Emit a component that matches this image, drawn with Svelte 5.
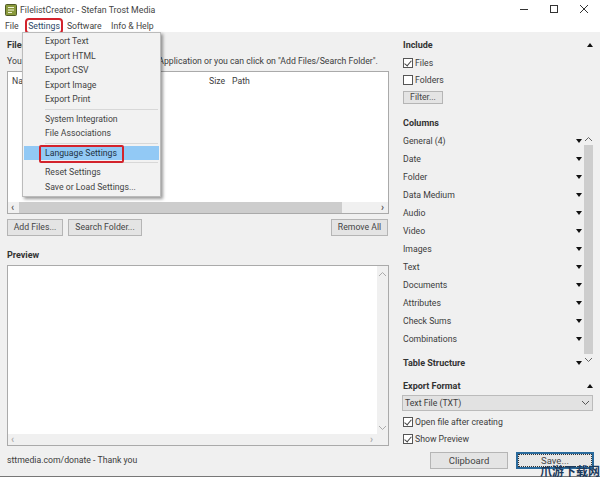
<script>
  const menu = [
    ['Export Text', 'Export HTML', 'Export CSV', 'Export Image', 'Export Print'],
    ['System Integration', 'File Associations'],
    ['Language Settings'],
    ['Reset Settings', 'Save or Load Settings...']
  ];
  const columns = ['General (4)', 'Date', 'Folder', 'Data Medium', 'Audio', 'Video', 'Images', 'Text', 'Documents', 'Attributes', 'Check Sums', 'Combinations'];
</script>

<div class="window">
  <header class="titlebar">
    <svg class="appicon" width="12" height="12" viewBox="0 0 12 12">
      <rect x="0.5" y="0.5" width="11" height="11" rx="1" fill="#8a9a3c" stroke="#4f5a28" />
      <path d="M3 3.5h6M3 6h6M3 8.5h4" stroke="#f3f3d8" stroke-width="1.2" />
    </svg>
    <span class="title">FilelistCreator - Stefan Trost Media</span>
    <div class="winbtns">
      <svg width="10" height="10" viewBox="0 0 10 10"><path d="M1 5.5h8" stroke="#333" /></svg>
      <svg width="10" height="10" viewBox="0 0 10 10"><rect x="1.5" y="1.5" width="7" height="7" fill="none" stroke="#333" /></svg>
      <svg width="10" height="10" viewBox="0 0 10 10"><path d="M1 1l8 8M9 1l-8 8" stroke="#333" /></svg>
    </div>
  </header>

  <nav class="menubar">
    <span>File</span>
    <span class="active">Settings</span>
    <span>Software</span>
    <span>Info &amp; Help</span>
    <div class="dropdown">
      {#each menu as group, i}
        {#if i > 0}<div class="sep"></div>{/if}
        {#each group as item}
          <div class="item" class:selected={item === 'Language Settings'}><span>{item}</span></div>
        {/each}
      {/each}
    </div>
  </nav>

  <main class="body">
    <section class="left">
      <h2 class="filehead">Files</h2>
      <p class="hint">You can drag and drop all files into this Application or you can click on "Add Files/Search Folder".</p>
      <div class="box listbox">
        <div class="thead">
          <span class="th name">Name</span>
          <span class="th size">Size</span>
          <span class="th path">Path</span>
        </div>
        <div class="grow"></div>
        <div class="hscroll">
          <span class="chev">‹</span>
          <div class="thumb"></div>
          <span class="chev">›</span>
        </div>
      </div>
      <div class="actions">
        <button class="btn add">Add Files...</button>
        <button class="btn search">Search Folder...</button>
        <span class="grow"></span>
        <button class="btn remove">Remove All</button>
      </div>
      <h2 class="previewhead">Preview</h2>
      <div class="box previewbox">
        <div class="previewmain">
          <div class="grow"></div>
          <div class="hscroll light"><span class="chev">‹</span><span class="chev">›</span></div>
        </div>
        <div class="vscroll light">
          <svg width="9" height="6" viewBox="0 0 9 6"><path d="M1 5l3.5-3.5L8 5" fill="none" stroke="#aaa" /></svg>
          <svg width="9" height="6" viewBox="0 0 9 6"><path d="M1 1l3.5 3.5L8 1" fill="none" stroke="#aaa" /></svg>
        </div>
      </div>
      <p class="donate">sttmedia.com/donate - Thank you</p>
    </section>

    <aside class="right">
      <div class="rowhead"><h2>Include</h2><i class="tri up"></i></div>
      <label class="check first"><span class="cb on"></span>Files</label>
      <label class="check"><span class="cb"></span>Folders</label>
      <button class="btn filter">Filter...</button>
      <h2 class="colhead">Columns</h2>
      <div class="colwrap">
        <div class="collist">
          {#each columns as c}
            <div class="colrow"><span>{c}</span><i class="tri"></i></div>
          {/each}
          <div class="colrow tablerow"><h2>Table Structure</h2><i class="tri"></i></div>
        </div>
        <div class="colscroll">
          <svg width="9" height="6" viewBox="0 0 9 6"><path d="M1 5l3.5-3.5L8 5" fill="none" stroke="#666" /></svg>
          <div class="colthumb"></div>
          <svg width="9" height="6" viewBox="0 0 9 6"><path d="M1 1l3.5 3.5L8 1" fill="none" stroke="#666" /></svg>
        </div>
      </div>
      <div class="rowhead exporthead"><h2>Export Format</h2><i class="tri up"></i></div>
      <div class="select">
        <span>Text File (TXT)</span>
        <svg width="9" height="6" viewBox="0 0 9 6"><path d="M1 1l3.5 3.5L8 1" fill="none" stroke="#555" /></svg>
      </div>
      <label class="check opt"><span class="cb on"></span>Open file after creating</label>
      <label class="check"><span class="cb on"></span>Show Preview</label>
      <div class="savebar">
        <button class="btn big">Clipboard</button>
        <button class="btn big save">Save...</button>
      </div>
    </aside>
  </main>
  <div class="watermark">爪游下载网</div>
</div>

<style>
  :global(body) {
    margin: 0;
    background: #fff;
  }
  .window {
    width: 600px;
    height: 477px;
    overflow: hidden;
    position: relative;
    display: flex;
    flex-direction: column;
    font-family: Roboto, "Open Sans", sans-serif;
    font-size: 8.7px;
    color: #3c3c3c;
    background: #fff;
  }
  .titlebar {
    height: 19px;
    display: flex;
    align-items: center;
    padding-left: 5px;
    flex: none;
  }
  .appicon { margin-right: 3px; }
  .title { font-size: 8.8px; color: #444; }
  .winbtns {
    margin-left: auto;
    display: flex;
    gap: 20px;
    padding-right: 11px;
    margin-top: -2px;
  }
  .menubar {
    height: 13px;
    flex: none;
    display: flex;
    align-items: center;
    position: relative;
    padding-left: 5px;
    gap: 9.5px;
    color: #444;
  }
  .menubar > .active {
    margin-right: -2.5px;
    outline: 2px solid #d3232c;
    outline-offset: 1px;
    border-radius: 1px;
    color: #2d4a6a;
  }
  .dropdown {
    position: absolute;
    left: 22px;
    top: 13px;
    width: 139px;
    height: 165px;
    box-sizing: border-box;
    padding: 1px 1px;
    background: #f2f2f2;
    border: 1px solid #bbb;
    box-shadow: 2px 2px 3px rgba(0,0,0,.4);
    z-index: 5;
  }
  .item {
    height: 14.5px;
    line-height: 14px;
    padding-left: 21px;
    color: #444;
  }
  .item.selected {
    background: #92c9f5;
    color: #234;
    position: relative;
  }
  .item.selected span {
    position: relative;
    z-index: 1;
  }
  .item.selected::after {
    content: "";
    position: absolute;
    left: 15px;
    top: -1px;
    width: 81px;
    height: 14px;
    border: 2px solid #d3232c;
    border-radius: 2px;
  }
  .sep {
    height: 1px;
    margin: 2px 1px 2px 21px;
    background: #d8d8d8;
  }
  .body {
    flex: 1;
    min-height: 0;
    background: #f0f0f0;
    border-bottom: 1px solid #777;
    display: flex;
    padding-left: 7px;
  }
  h2 {
    margin: 0;
    font-size: 9px;
    font-weight: 700;
    color: #333;
  }
  .left {
    width: 382px;
    flex: none;
    display: flex;
    flex-direction: column;
  }
  .filehead { margin-top: 7px; line-height: 12px; }
  .hint {
    margin: 4px 0 0;
    white-space: nowrap;
    line-height: 13px;
    height: 14px;
  }
  .box {
    background: #fff;
    border: 1px solid #aaa;
    box-sizing: border-box;
  }
  .listbox {
    margin-top: 2px;
    height: 143px;
    display: flex;
    flex-direction: column;
  }
  .grow { flex: 1; }
  .thead {
    display: flex;
    height: 17px;
    align-items: center;
    position: relative;
  }
  .th { position: absolute; }
  .name { left: 4px; }
  .size { left: 201px; }
  .path { left: 224px; }
  .hscroll {
    height: 11px;
    background: #f0f0f0;
    display: flex;
    align-items: center;
    justify-content: space-between;
    padding: 0 4px 0 3px;
    position: relative;
    flex: none;
  }
  .hscroll .thumb {
    position: absolute;
    left: 11px;
    right: 46px;
    top: 0;
    bottom: 0;
    background: #cdcdcd;
  }
  .chev { font-size: 10px; line-height: 10px; font-weight: 700; color: #555; }
  .light .chev { color: #aaa; }
  .actions {
    margin-top: 5px;
    display: flex;
    gap: 5px;
    padding-right: 1px;
  }
  .btn {
    font: inherit;
    color: #444;
    background: #e4e4e4;
    border: 1px solid #b5b5b5;
    padding: 0;
    height: 17px;
    line-height: 13px;
    border-radius: 0;
  }
  .add { width: 56px; }
  .search { width: 74px; }
  .remove { width: 57px; }
  .previewhead { margin-top: 13px; line-height: 12px; }
  .previewbox {
    margin-top: 4px;
    height: 181px;
    display: flex;
  }
  .previewmain {
    flex: 1;
    display: flex;
    flex-direction: column;
  }
  .vscroll {
    width: 11px;
    background: #f0f0f0;
    display: flex;
    flex-direction: column;
    justify-content: space-between;
    align-items: center;
    padding: 5px 0 14px;
    box-sizing: border-box;
  }
  .donate { margin: 8px 0 0; line-height: 12px; }
  .right {
    margin-left: 12px;
    width: 192px;
    flex: none;
    display: flex;
    flex-direction: column;
    padding-left: 2px;
    box-sizing: border-box;
  }
  .rowhead {
    display: flex;
    align-items: center;
    justify-content: space-between;
    margin-top: 7px;
    height: 12px;
  }
  .tri {
    display: block;
    width: 0;
    height: 0;
    border-left: 3.5px solid transparent;
    border-right: 3.5px solid transparent;
    border-top: 4px solid #111;
  }
  .tri.up {
    border-top: 0;
    border-bottom: 4px solid #111;
  }
  .check {
    display: flex;
    align-items: center;
    height: 17px;
    gap: 2px;
  }
  .check.first { margin-top: 3px; }
  .cb {
    width: 8px;
    height: 8px;
    border: 1px solid #555;
    background: #fff;
    position: relative;
    flex: none;
  }
  .cb.on::after {
    content: "";
    position: absolute;
    left: 2px;
    top: 0;
    width: 3px;
    height: 6px;
    border: solid #444;
    border-width: 0 1px 1px 0;
    transform: rotate(40deg);
  }
  .filter {
    align-self: flex-start;
    height: 13px;
    width: 40px;
    margin-top: 3px;
    line-height: 11px;
  }
  .colhead { margin-top: 13px; line-height: 12px; }
  .colwrap {
    display: flex;
    margin-top: 3px;
    height: 236px;
  }
  .collist { flex: 1; min-width: 0; }
  .colrow {
    height: 18px;
    display: flex;
    align-items: center;
    justify-content: space-between;
    padding-right: 2px;
  }
  .tablerow { margin-top: 6px; }
  .colscroll {
    width: 9px;
    display: flex;
    flex-direction: column;
    align-items: center;
    justify-content: space-between;
    padding: 4px 0 5px;
    box-sizing: border-box;
  }
  .colthumb {
    width: 9px;
    height: 209px;
    background: #cdcdcd;
  }
  .exporthead { margin-top: 12px; }
  .select {
    margin-top: 3px;
    margin-left: -1px;
    height: 16px;
    width: 191px;
    box-sizing: border-box;
    background: #e2e2e2;
    border: 1px solid #bbb;
    display: flex;
    align-items: center;
    justify-content: space-between;
    padding: 0 2px;
  }
  .opt { margin-top: 2px; }
  .savebar {
    display: flex;
    justify-content: flex-end;
    gap: 8px;
    margin-top: 5px;
    margin-right: -1px;
  }
  .big {
    width: 78px;
    height: 17px;
    font-size: 9.5px;
  }
  .save {
    border: 2px solid #2a6a9c;
    outline: 1px dotted #333;
    outline-offset: -3px;
    background: #e6e6e6;
  }
  .watermark {
    position: absolute;
    right: 0;
    bottom: 0;
    font-family: "Noto Sans CJK SC", sans-serif;
    font-weight: 700;
    font-size: 12px;
    line-height: 13px;
    color: #1c3a5c;
  }
</style>
